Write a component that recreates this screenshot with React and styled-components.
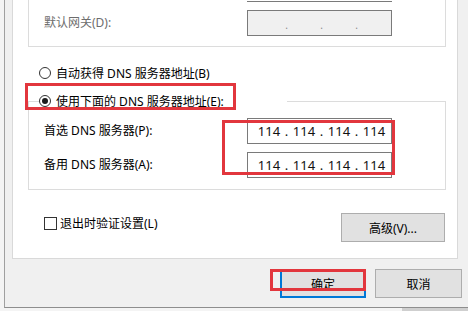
import React from "react";
import styled, { createGlobalStyle } from "styled-components";

const Global = createGlobalStyle`
  html, body { margin: 0; padding: 0; background: #f4f4f4; }
  body {
    font-family: "Noto Sans", "Noto Sans CJK SC", sans-serif;
    font-size: 12px;
    color: #000;
    text-autospace: no-autospace;
  }
  * { box-sizing: border-box; }
`;

const Screen = styled.div`
  position: relative;
  width: 468px;
  height: 311px;
  overflow: hidden;
  background: #f4f4f4;
  display: flex;
  flex-direction: column;
`;

const Window = styled.div`
  flex: none;
  margin-left: 4px;
  width: 480px;
  height: 308px;
  background: #f0f0f0;
  border-left: 1px solid #a0a0a0;
  border-bottom: 1px solid #8e8e8e;
  padding-left: 7px;
  display: flex;
  flex-direction: column;
`;

const BehindStrip = styled.div`
  flex: 1;
  display: flex;
`;

const BehindShade = styled.div`
  margin-left: 402px;
  flex: 1;
  background: #cfcfcf;
`;

const Page = styled.div`
  flex: none;
  width: 446px;
  height: 259px;
  background: #fff;
  border: 1px solid #d9d9d9;
  border-top: none;
  padding: 0 11px 0 15px;
  display: flex;
  flex-direction: column;
`;

const GroupTop = styled.div`
  border: 1px solid #dcdcdc;
  border-top: none;
  padding: 0 0 10px 15px;
`;

const FieldTail = styled.div`
  margin-left: 203px;
  width: 145px;
  height: 2px;
  border-bottom: 1px solid #7a7a7a;
`;

const FormGrid = styled.div`
  display: grid;
  grid-template-columns: 203px 145px;
  row-gap: 8px;
  align-items: center;
  margin-top: ${(p) => p.$top || 0}px;
  padding-left: ${(p) => p.$left || 0}px;
`;

const Label = styled.span`
  line-height: 20px;
  white-space: nowrap;
  color: ${(p) => (p.$disabled ? "#6d6d6d" : "#000")};
`;

const IpField = styled.div`
  height: 26px;
  border: 1px solid #7a7a7a;
  background: ${(p) => (p.$disabled ? "#f0f0f0" : "#fff")};
  display: flex;
  align-items: center;
  padding-left: 7px;
`;

const Octet = styled.span`
  width: 28px;
  text-align: center;
  font-size: 13px;
  line-height: 20px;
  color: #111;
`;

const Dot = styled.span`
  width: 7px;
  text-align: center;
  line-height: 20px;
  color: ${(p) => (p.$disabled ? "#8a8a8a" : "#111")};
  font-size: ${(p) => (p.$disabled ? 10 : 13)}px;
  padding-top: ${(p) => (p.$disabled ? 3 : 0)}px;
`;

const RadioRow = styled.label`
  display: flex;
  align-items: center;
  gap: 5px;
  height: 20px;
  margin: 16px 0 0 11px;
  white-space: nowrap;
`;

const RadioMark = styled.span`
  flex: none;
  width: 12px;
  height: 12px;
  border-radius: 50%;
  border: 1px solid #333;
  background: #fff;
  display: flex;
  align-items: center;
  justify-content: center;
  &::after {
    content: "";
    width: 6px;
    height: 6px;
    border-radius: 50%;
    background: ${(p) => (p.$checked ? "#1a1a1a" : "transparent")};
  }
`;

const Group = styled.fieldset`
  margin: 8px 0 0 0;
  padding: 0 0 11px 0;
  border: 1px solid #dcdcdc;
  min-width: 0;
`;

const Legend = styled.legend`
  margin-left: 10px;
  padding: 0;
  width: 248px;
  height: 20px;
  display: flex;
  align-items: center;
  gap: 5px;
  white-space: nowrap;
`;

const BottomRow = styled.div`
  margin-top: 23px;
  display: flex;
  justify-content: space-between;
  align-items: flex-start;
  padding: 0 1px 0 16px;
`;

const CheckRow = styled.label`
  display: flex;
  align-items: center;
  gap: 3px;
  height: 20px;
  white-space: nowrap;
`;

const CheckBox = styled.span`
  flex: none;
  width: 13px;
  height: 13px;
  border: 1px solid #333;
  background: #fff;
`;

const Button = styled.button`
  width: ${(p) => p.$w}px;
  height: 29px;
  padding: 0;
  font-family: inherit;
  font-size: 12px;
  color: #000;
  background: #e1e1e1;
  border: ${(p) => (p.$default ? "2px solid #0078d7" : "1px solid #adadad")};
  display: flex;
  align-items: center;
  justify-content: center;
`;

const ButtonBar = styled.div`
  margin-top: 10px;
  display: flex;
  gap: 9px;
  padding-left: 268px;
`;

const Mark = styled.div`
  position: absolute;
  border: 3px solid #e2363d;
  pointer-events: none;
`;

function Ip({ values, disabled }) {
  const parts = values || ["", "", "", ""];
  return (
    <IpField $disabled={disabled}>
      {parts.map((v, i) => (
        <React.Fragment key={i}>
          <Octet>{v}</Octet>
          {i < 3 && <Dot $disabled={disabled}>.</Dot>}
        </React.Fragment>
      ))}
    </IpField>
  );
}

const dns = ["114", "114", "114", "114"];

export default function App() {
  return (
    <>
      <Global />
      <Screen>
        <Window>
          <Page>
            <GroupTop>
              <FieldTail />
              <FormGrid $top={8}>
                <Label $disabled>默认网关(D):</Label>
                <Ip disabled />
              </FormGrid>
            </GroupTop>

            <RadioRow>
              <RadioMark />
              <span>自动获得 DNS 服务器地址(B)</span>
            </RadioRow>

            <Group>
              <Legend>
                <RadioMark $checked />
                <span>使用下面的 DNS 服务器地址(E):</span>
              </Legend>
              <FormGrid $top={7} $left={15}>
                <Label>首选 DNS 服务器(P):</Label>
                <Ip values={dns} />
                <Label>备用 DNS 服务器(A):</Label>
                <Ip values={dns} />
              </FormGrid>
            </Group>

            <BottomRow>
              <CheckRow>
                <CheckBox />
                <span>退出时验证设置(L)</span>
              </CheckRow>
              <Button $w={104}>高级(V)...</Button>
            </BottomRow>
          </Page>

          <ButtonBar>
            <Button $w={86} $default>确定</Button>
            <Button $w={87}>取消</Button>
          </ButtonBar>
        </Window>
        <BehindStrip>
          <BehindShade />
        </BehindStrip>

        <Mark style={{ left: 25, top: 83, width: 211, height: 27 }} />
        <Mark style={{ left: 222, top: 120, width: 173, height: 55 }} />
        <Mark style={{ left: 270, top: 269, width: 96, height: 22 }} />
      </Screen>
    </>
  );
}
